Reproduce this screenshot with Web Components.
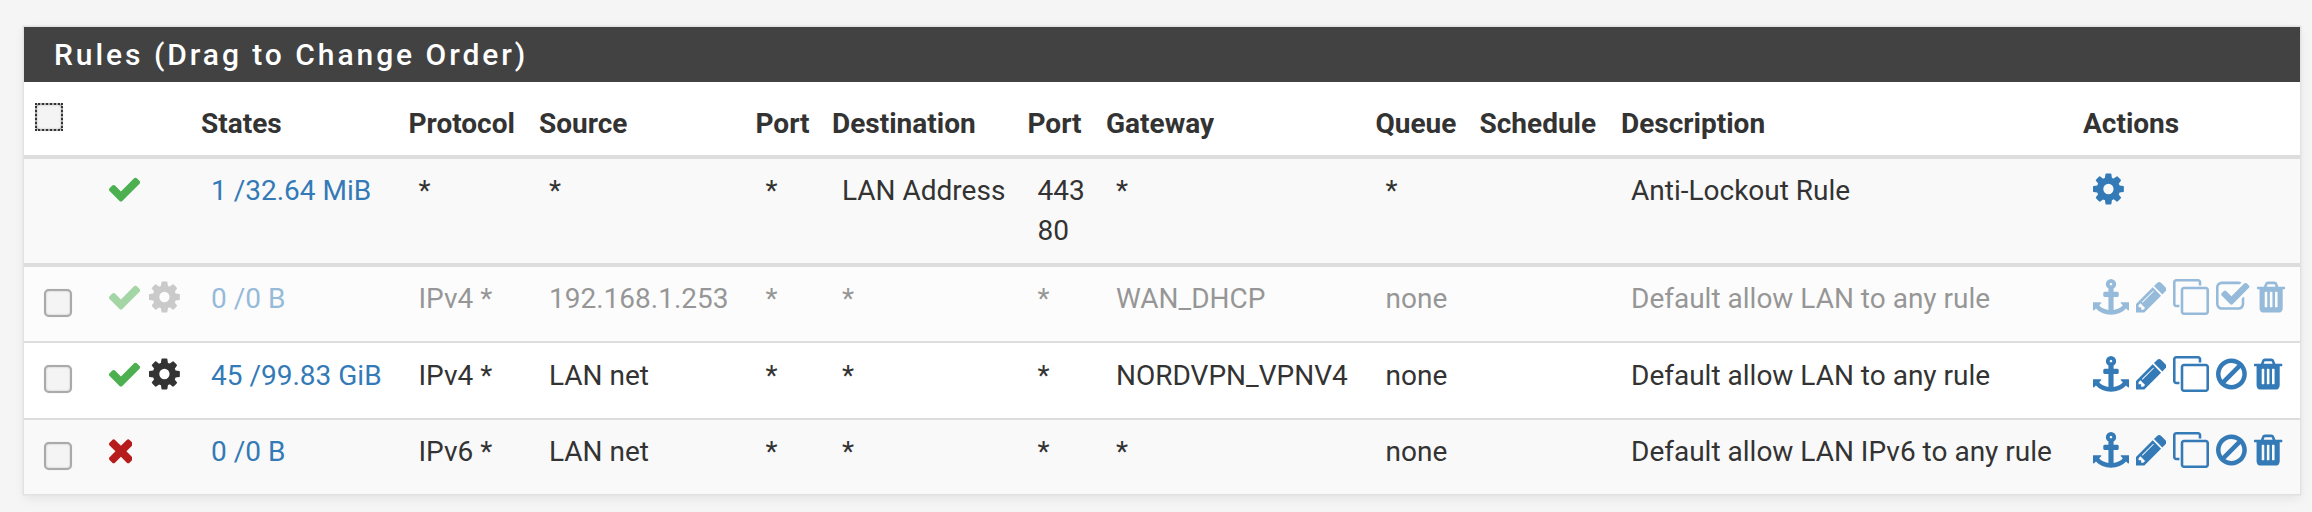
<!DOCTYPE html>
<html>
<head>
<meta charset="utf-8">
<title>Rules</title>
<style>
  html, body { margin: 0; background: #f5f5f5; }
  body { padding: 27px 12px 18px 24px; font-family: Roboto, "Liberation Sans", sans-serif; color: #333; }
</style>
</head>
<body>
<rules-panel heading="Rules (Drag to Change Order)">
  <rule-row head>
    <rule-cell><rule-check focused></rule-check></rule-cell>
    <rule-cell></rule-cell>
    <rule-cell>States</rule-cell>
    <rule-cell>Protocol</rule-cell>
    <rule-cell>Source</rule-cell>
    <rule-cell>Port</rule-cell>
    <rule-cell>Destination</rule-cell>
    <rule-cell>Port</rule-cell>
    <rule-cell>Gateway</rule-cell>
    <rule-cell>Queue</rule-cell>
    <rule-cell>Schedule</rule-cell>
    <rule-cell>Description</rule-cell>
    <rule-cell>Actions</rule-cell>
  </rule-row>

  <rule-row striped thick>
    <rule-cell></rule-cell>
    <rule-cell icons><fa-icon name="check" color="#4caf50"></fa-icon></rule-cell>
    <rule-cell link>1 /32.64 MiB</rule-cell>
    <rule-cell>*</rule-cell>
    <rule-cell>*</rule-cell>
    <rule-cell>*</rule-cell>
    <rule-cell>LAN Address</rule-cell>
    <rule-cell>443<br>80</rule-cell>
    <rule-cell>*</rule-cell>
    <rule-cell>*</rule-cell>
    <rule-cell></rule-cell>
    <rule-cell>Anti-Lockout Rule</rule-cell>
    <rule-cell icons><fa-icon name="cog" color="#337ab7"></fa-icon></rule-cell>
  </rule-row>

  <rule-row disabled>
    <rule-cell><rule-check></rule-check></rule-cell>
    <rule-cell icons dim><fa-icon name="check" color="#4caf50"></fa-icon><fa-icon name="cog" color="#999"></fa-icon></rule-cell>
    <rule-cell link dim>0 /0 B</rule-cell>
    <rule-cell dim>IPv4 *</rule-cell>
    <rule-cell dim>192.168.1.253</rule-cell>
    <rule-cell dim>*</rule-cell>
    <rule-cell dim>*</rule-cell>
    <rule-cell dim>*</rule-cell>
    <rule-cell dim>WAN_DHCP</rule-cell>
    <rule-cell dim>none</rule-cell>
    <rule-cell dim></rule-cell>
    <rule-cell dim>Default allow LAN to any rule</rule-cell>
    <rule-cell icons actions dim>
      <fa-icon name="anchor" color="#337ab7"></fa-icon>
      <fa-icon name="pencil" color="#337ab7"></fa-icon>
      <fa-icon name="clone" color="#337ab7"></fa-icon>
      <fa-icon name="checksquare" color="#337ab7"></fa-icon>
      <fa-icon name="trash" color="#337ab7"></fa-icon>
    </rule-cell>
  </rule-row>

  <rule-row plain>
    <rule-cell><rule-check></rule-check></rule-cell>
    <rule-cell icons><fa-icon name="check" color="#4caf50"></fa-icon><fa-icon name="cog" color="#333"></fa-icon></rule-cell>
    <rule-cell link>45 /99.83 GiB</rule-cell>
    <rule-cell>IPv4 *</rule-cell>
    <rule-cell>LAN net</rule-cell>
    <rule-cell>*</rule-cell>
    <rule-cell>*</rule-cell>
    <rule-cell>*</rule-cell>
    <rule-cell>NORDVPN_VPNV4</rule-cell>
    <rule-cell>none</rule-cell>
    <rule-cell></rule-cell>
    <rule-cell>Default allow LAN to any rule</rule-cell>
    <rule-cell icons actions>
      <fa-icon name="anchor" color="#337ab7"></fa-icon>
      <fa-icon name="pencil" color="#337ab7"></fa-icon>
      <fa-icon name="clone" color="#337ab7"></fa-icon>
      <fa-icon name="ban" color="#337ab7"></fa-icon>
      <fa-icon name="trash" color="#337ab7"></fa-icon>
    </rule-cell>
  </rule-row>

  <rule-row striped last>
    <rule-cell><rule-check></rule-check></rule-cell>
    <rule-cell icons><fa-icon name="times" color="#b71c1c"></fa-icon></rule-cell>
    <rule-cell link>0 /0 B</rule-cell>
    <rule-cell>IPv6 *</rule-cell>
    <rule-cell>LAN net</rule-cell>
    <rule-cell>*</rule-cell>
    <rule-cell>*</rule-cell>
    <rule-cell>*</rule-cell>
    <rule-cell>*</rule-cell>
    <rule-cell>none</rule-cell>
    <rule-cell></rule-cell>
    <rule-cell>Default allow LAN IPv6 to any rule</rule-cell>
    <rule-cell icons actions>
      <fa-icon name="anchor" color="#337ab7"></fa-icon>
      <fa-icon name="pencil" color="#337ab7"></fa-icon>
      <fa-icon name="clone" color="#337ab7"></fa-icon>
      <fa-icon name="ban" color="#337ab7"></fa-icon>
      <fa-icon name="trash" color="#337ab7"></fa-icon>
    </rule-cell>
  </rule-row>
</rules-panel>

<script>
// glyphs on the 1792 grid, with the left/right edges of each glyph
const GLYPHS = {
  check: [121, 1671, "M1671 566q0 40-28 68l-724 724-136 136q-28 28-68 28t-68-28l-136-136-362-362q-28-28-28-68t28-68l136-136q28-28 68-28t68 28l294 295 656-657q28-28 68-28t68 28l136 136q28 28 28 68z"],
  cog: [128, 1664, "M1152 896q0-106-75-181t-181-75-181 75-75 181 75 181 181 75 181-75 75-181zm512-109v222q0 12-8 23t-20 13l-185 28q-19 54-39 91 35 50 107 138 10 12 10 25t-9 23q-27 37-99 108t-94 71q-12 0-26-9l-138-108q-44 23-91 38-16 136-29 186-7 28-36 28h-222q-14 0-24.5-8.5t-11.5-21.5l-28-184q-49-16-90-37l-141 107q-10 9-25 9-14 0-25-11-126-114-165-168-7-10-7-23 0-12 8-23 15-21 51-66.5t54-70.5q-27-50-41-99l-183-27q-13-2-21-12.5t-8-23.5v-222q0-12 8-23t19-13l186-28q14-46 39-92-40-57-107-138-10-12-10-24 0-10 9-23 26-36 98.5-107.5t94.5-71.5q13 0 26 10l138 107q44-23 91-38 16-136 29-186 7-28 36-28h222q14 0 24.5 8.5t11.5 21.5l28 184q49 16 90 37l142-107q9-9 24-9 13 0 25 10 129 119 165 170 7 8 7 22 0 12-8 23-15 21-51 66.5t-54 70.5q26 50 41 98l183 28q13 2 21 12.5t8 23.5z"],
  times: [302, 1490, "M1490 1322q0 40-28 68l-136 136q-28 28-68 28t-68-28l-294-294-294 294q-28 28-68 28t-68-28l-136-136q-28-28-28-68t28-68l294-294-294-294q-28-28-28-68t28-68l136-136q28-28 68-28t68 28l294 294 294-294q28-28 68-28t68 28l136 136q28 28 28 68t-28 68l-294 294 294 294q28 28 28 68z"],
  anchor: [0, 1792, "M960 256q0-26-19-45t-45-19-45 19-19 45 19 45 45 19 45-19 19-45zm832 928v352q0 22-20 30-8 2-12 2-12 0-23-9l-93-93q-119 143-318.5 226.5t-429.5 83.5-429.5-83.5-318.5-226.5l-93 93q-9 9-23 9-4 0-12-2-20-8-20-30v-352q0-14 9-23t23-9h352q22 0 30 20 8 19-7 35l-100 100q67 91 189.5 153.5t271.5 82.5v-647h-192q-26 0-45-19t-19-45v-128q0-26 19-45t45-19h192v-163q-58-34-93-92.5t-35-128.5q0-106 75-181t181-75 181 75 75 181q0 70-35 128.5t-93 92.5v163h192q26 0 45 19t19 45v128q0 26-19 45t-45 19h-192v647q149-20 271.5-82.5t189.5-153.5l-100-100q-15-16-7-35 8-20 30-20h352q14 0 23 9t9 23z"],
  pencil: [128, 1643, "M491 1536l91-91-235-235-91 91v107h128v128h107zm523-928q0-22-22-22-10 0-17 7l-542 542q-7 7-7 17 0 22 22 22 10 0 17-7l542-542q7-7 7-17zm-54-192l416 416-832 832h-416v-416zm683 96q0 53-37 90l-166 166-416-416 166-165q36-38 90-38 53 0 91 38l235 234q37 39 37 91z"],
  clone: [0, 1792, "M1664 1632v-1088q0-13-9.5-22.5t-22.5-9.5h-1088q-13 0-22.5 9.5t-9.5 22.5v1088q0 13 9.5 22.5t22.5 9.5h1088q13 0 22.5-9.5t9.5-22.5zm128-1088v1088q0 66-47 113t-113 47h-1088q-66 0-113-47t-47-113v-1088q0-66 47-113t113-47h1088q66 0 113 47t47 113zm-384-384v160h-128v-160q0-13-9.5-22.5t-22.5-9.5h-1088q-13 0-22.5 9.5t-9.5 22.5v1088q0 13 9.5 22.5t22.5 9.5h160v128h-160q-66 0-113-47t-47-113v-1088q0-66 47-113t113-47h1088q66 0 113 47t47 113z"],
  ban: [128, 1664, "M1440 893q0-161-87-295l-754 753q137 89 297 89 111 0 211.5-43.5t173.5-116.5 116-174.5 43-212.5zm-999 299l755-754q-135-91-300-91-148 0-273 73t-198 199-73 274q0 162 89 299zm1223-299q0 157-61 300t-163.5 246-245 164-298.5 61-298.5-61-245-164-163.5-246-61-300 61-299.5 163.5-245.5 245-164 298.5-61 298.5 61 245 164 163.5 245.5 61 299.5z"],
  checksquare: [64, 1727, "M1472 930v318q0 119-84.5 203.5t-203.5 84.5h-832q-119 0-203.5-84.5t-84.5-203.5v-832q0-119 84.5-203.5t203.5-84.5h832q63 0 117 25 15 7 18 23 3 17-9 29l-49 49q-10 10-23 10-3 0-9-2-23-6-45-6h-832q-66 0-113 47t-47 113v832q0 66 47 113t113 47h832q66 0 113-47t47-113v-254q0-13 9-22l64-64q10-10 23-10 6 0 12 3 20 8 20 29zm231-489l-814 814q-24 24-57 24t-57-24l-430-430q-24-24-24-57t24-57l110-110q24-24 57-24t57 24l263 263 647-647q24-24 57-24t57 24l110 110q24 24 24 57t-24 57z"],
  trash: [192, 1600, "M704 1376v-704q0-14-9-23t-23-9h-64q-14 0-23 9t-9 23v704q0 14 9 23t23 9h64q14 0 23-9t9-23zm256 0v-704q0-14-9-23t-23-9h-64q-14 0-23 9t-9 23v704q0 14 9 23t23 9h64q14 0 23-9t9-23zm256 0v-704q0-14-9-23t-23-9h-64q-14 0-23 9t-9 23v704q0 14 9 23t23 9h64q14 0 23-9t9-23zm-544-992h448l-48-117q-7-9-17-11h-317q-10 2-17 11zm928 32v64q0 14-9 23t-23 9h-96v948q0 83-47 143.5t-113 60.5h-832q-66 0-113-61.5t-47-145.5v-945h-96q-14 0-23-9t-9-23v-64q0-14 9-23t23-9h309l70-167q15-37 54-63t79-26h320q40 0 79 26t54 63l70 167h309q14 0 23 9t9 23z"],
};

class FaIcon extends HTMLElement {
  constructor() {
    super();
    this.attachShadow({ mode: "open" });
  }

  connectedCallback() {
    const [x0, x1, d] = GLYPHS[this.getAttribute("name")];
    const w = x1 - x0;
    this.shadowRoot.innerHTML = `
      <style>
        :host { display: block; height: 36px; }
        svg { display: block; }
      </style>
      <svg width="${(w / 1792) * 36}" height="36" viewBox="${x0} 0 ${w} 1792">
        <path fill="${this.getAttribute("color")}" d="${d}"/>
      </svg>
    `;
  }
}

class RuleCheck extends HTMLElement {
  constructor() {
    super();
    this.attachShadow({ mode: "open" });
    this.shadowRoot.innerHTML = `
      <style>
        :host { display: block; width: 28px; height: 28px; box-sizing: border-box; }
        :host([focused]) { outline: 2px dotted #333; outline-offset: -2px; }
        .box {
          box-sizing: border-box;
          width: 100%;
          height: 100%;
          background: #f4f4f4;
          border: 2px solid #aaa;
          border-radius: 5px;
          box-shadow: inset 0 0 2px #bbb, 0 0 1px #ccc;
        }
      </style>
      <div class="box"></div>
    `;
  }
}

class RuleCell extends HTMLElement {
  constructor() {
    super();
    this.attachShadow({ mode: "open" });
    this.shadowRoot.innerHTML = `
      <style>
        :host {
          display: block;
          min-width: 0;
          padding: var(--cell-top, 11.5px) 0 12px 10px;
          white-space: nowrap;
        }
        :host([link]) { color: #337ab7; }
        :host([dim]) { opacity: 0.5; }
        :host([icons]) { display: flex; gap: 9.5px; }
        :host([actions]) { gap: 7px; }
      </style>
      <slot></slot>
    `;
  }
}

class RuleRow extends HTMLElement {
  constructor() {
    super();
    this.attachShadow({ mode: "open" });
    this.shadowRoot.innerHTML = `
      <style>
        :host {
          display: grid;
          grid-template-columns: var(--rule-cols);
          min-height: 74px;
          font-size: 28px;
          line-height: 40px;
          background: #fff;
          border-bottom: 2px solid #ddd;
        }
        :host([head]) {
          box-sizing: border-box;
          height: 77px;
          padding-top: 10.5px;
          font-weight: 700;
          border-bottom-width: 4px;
        }
        :host([striped]) { background: #f9f9f9; }
        :host([thick]) { border-bottom-width: 4px; min-height: 104px; }
        :host([disabled]) { background: #fcfcfc; }
        :host([plain]) { min-height: 75px; --cell-top: 12.5px; }
        :host([last]) { border-bottom: 0; --cell-top: 12px; }
        ::slotted(rule-cell:first-child) { padding-left: 20px; padding-top: 22px; padding-bottom: 0; }
        :host([head]) ::slotted(rule-cell) { padding-left: 0; }
        :host([head]) ::slotted(rule-cell:first-child) { padding-left: 11px; padding-top: 10.5px; }
      </style>
      <slot></slot>
    `;
  }
}

class RulesPanel extends HTMLElement {
  constructor() {
    super();
    this.attachShadow({ mode: "open" });
    this.shadowRoot.innerHTML = `
      <style>
        :host {
          display: block;
          background: #fff;
          box-shadow: 0 0 0 1.5px #e2e2e2, 0 4px 10px rgba(0, 0, 0, 0.08);
          --rule-cols: 74.5px 102.5px 207.5px 130.5px 216.5px 76.5px 195.5px 78.5px 269.5px 104px 141.5px 462px 217px;
        }
        h2 {
          margin: 0;
          padding: 0 30px;
          height: 55px;
          line-height: 55px;
          font-size: 30px;
          font-weight: 500;
          letter-spacing: 2.95px;
          color: #fff;
          background: #424242;
        }
      </style>
      <h2 id="title"></h2>
      <slot></slot>
    `;
    this.shadowRoot.getElementById("title").textContent = this.getAttribute("heading");
  }
}

customElements.define("fa-icon", FaIcon);
customElements.define("rule-check", RuleCheck);
customElements.define("rule-cell", RuleCell);
customElements.define("rule-row", RuleRow);
customElements.define("rules-panel", RulesPanel);
</script>
</body>
</html>
